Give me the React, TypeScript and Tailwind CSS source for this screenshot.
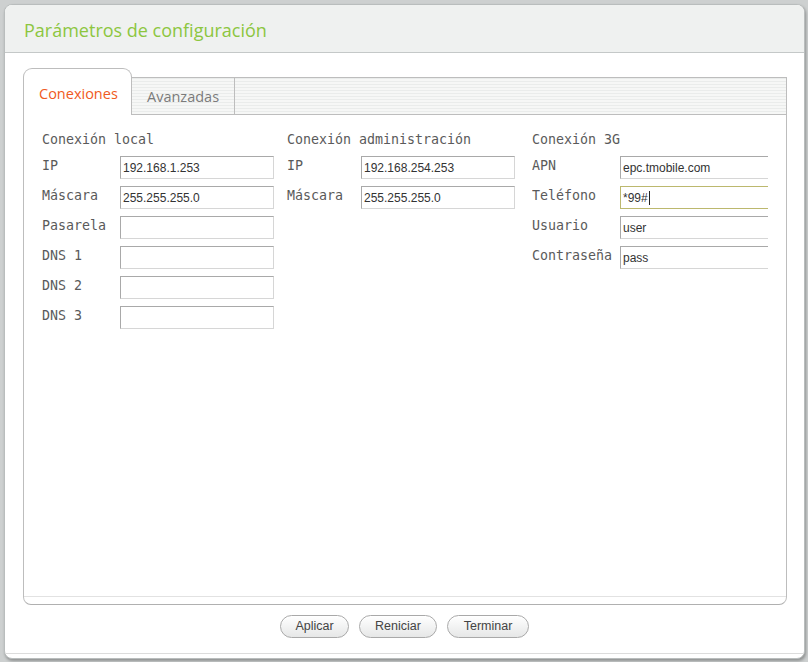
import React from 'react'

type Field = { label: string, value?: string, focused?: boolean }

const local: Field[] = [
    { label: 'IP', value: '192.168.1.253' },
    { label: 'Máscara', value: '255.255.255.0' },
    { label: 'Pasarela' },
    { label: 'DNS 1' },
    { label: 'DNS 2' },
    { label: 'DNS 3' },
]

const admin: Field[] = [
    { label: 'IP', value: '192.168.254.253' },
    { label: 'Máscara', value: '255.255.255.0' },
]

const g3: Field[] = [
    { label: 'APN', value: 'epc.tmobile.com' },
    { label: 'Teléfono', value: '*99#', focused: true },
    { label: 'Usuario', value: 'user' },
    { label: 'Contraseña', value: 'pass' },
]

function Input({ value, focused, open }: { value?: string, focused?: boolean, open?: boolean }) {
    return (
        <div
            className={`h-[23px] w-[154px] shrink-0 bg-white pl-[2px] pt-[1px] flex items-center text-[12px] text-[#333] font-['Liberation_Sans',Arial,sans-serif] border ${focused
                ? 'border-[#bcb86e]'
                : 'border-t-[#a9a9a9] border-l-[#a9a9a9] border-b-[#d6d6d6] border-r-[#d6d6d6]'} ${open ? 'border-r-0' : ''}`}
        >
            <span>{value}</span>
            {focused && <span className="ml-[1px] w-px h-[14px] bg-[#222]" />}
        </div>
    )
}

function Column({ title, fields, labelW, clip }: { title: string, fields: Field[], labelW: string, clip?: boolean }) {
    return (
        <div className={`flex flex-col ${clip ? 'w-[236px] overflow-hidden' : 'w-[245px]'}`}>
            <div className="h-[18px] leading-[18px] mt-[1px]">{title}</div>
            <div className="flex flex-col gap-[7px] mt-[7px]">
                {fields.map((f) => (
                    <div key={f.label} className="flex items-start">
                        <div className={`${labelW} shrink-0 leading-[18px] mt-[1px]`}>{f.label}</div>
                        <Input value={f.value} focused={f.focused} open={clip} />
                    </div>
                ))}
            </div>
        </div>
    )
}

function Button({ label, w }: { label: string, w: string }) {
    return (
        <button className={`${w} h-[23px] rounded-full border border-[#a9a9a9] bg-[linear-gradient(#ffffff,#e6e7e7)] text-[12.5px] text-[#444] font-['Liberation_Sans',Arial,sans-serif] shadow-[inset_0_1px_0_#fff]`}>
            {label}
        </button>
    )
}

const stripes = 'bg-[repeating-linear-gradient(0deg,#f6f7f6_0px,#f6f7f6_2px,#eaeceb_2px,#eaeceb_3px)]'

export default function App() {
    return (
        <div className="w-[808px] h-[662px] bg-[#cdd0d0] pt-[4px] pl-[4px]">
            <div className="w-[801px] h-[655px] flex flex-col bg-white border border-[#b9bdbd] rounded-[8px] shadow-[1px_2px_3px_rgba(0,0,0,0.3)] overflow-hidden">
                <div className="h-[48px] shrink-0 bg-[#eff1f0] border-b border-[#c4c8c8] flex items-center pl-[19px] pt-[3px]">
                    <span className="text-[18px] text-[#8cc63f] font-['Open_Sans',sans-serif]">Parámetros de configuración</span>
                </div>

                <div className="pl-[18px] pr-[17px] pt-[15px]">
                    <div className="h-[537px] flex flex-col">
                        <div className="flex h-[47px] shrink-0">
                            <div className="w-[109px] h-[47px] bg-white border border-b-0 border-[#bdbdbd] rounded-t-[9px] flex items-center pl-[15px] pt-[3px] text-[14.5px] text-[#f05a22] font-['Open_Sans',sans-serif]">
                                Conexiones
                            </div>
                            <div className={`flex-1 mt-[9px] h-[38px] border border-l-0 border-[#bdbdbd] ${stripes} flex`}>
                                <div className="w-[103px] border-r border-[#bdbdbd] flex items-center pl-[15px] pt-[1px] text-[14.5px] text-[#7b7b7b] font-['Open_Sans',sans-serif]">
                                    Avanzadas
                                </div>
                            </div>
                        </div>
                        <div className="flex-1 border border-t-0 border-[#bdbdbd] border-b-[#b0b0b0] rounded-b-[8px] flex flex-col">
                            <div className="flex-1 border-b border-[#e2e2e2] flex pl-[18px] pt-[15px] text-[13.3px] text-[#5a5a5a] font-['DejaVu_Sans_Mono',monospace]">
                                <Column title="Conexión local" fields={local} labelW="w-[78px]" />
                                <Column title="Conexión administración" fields={admin} labelW="w-[74px]" />
                                <Column title="Conexión 3G" fields={g3} labelW="w-[88px]" clip />
                            </div>
                            <div className="h-[7px]" />
                        </div>
                    </div>
                </div>

                <div className="mt-[10px] h-[23px] flex justify-center gap-[10px]">
                    <Button label="Aplicar" w="w-[69px]" />
                    <Button label="Reniciar" w="w-[78px]" />
                    <Button label="Terminar" w="w-[82px]" />
                </div>
                <div className="mt-[15px] border-t border-[#dcdcdc] h-[5px]" />
            </div>
        </div>
    )
}
